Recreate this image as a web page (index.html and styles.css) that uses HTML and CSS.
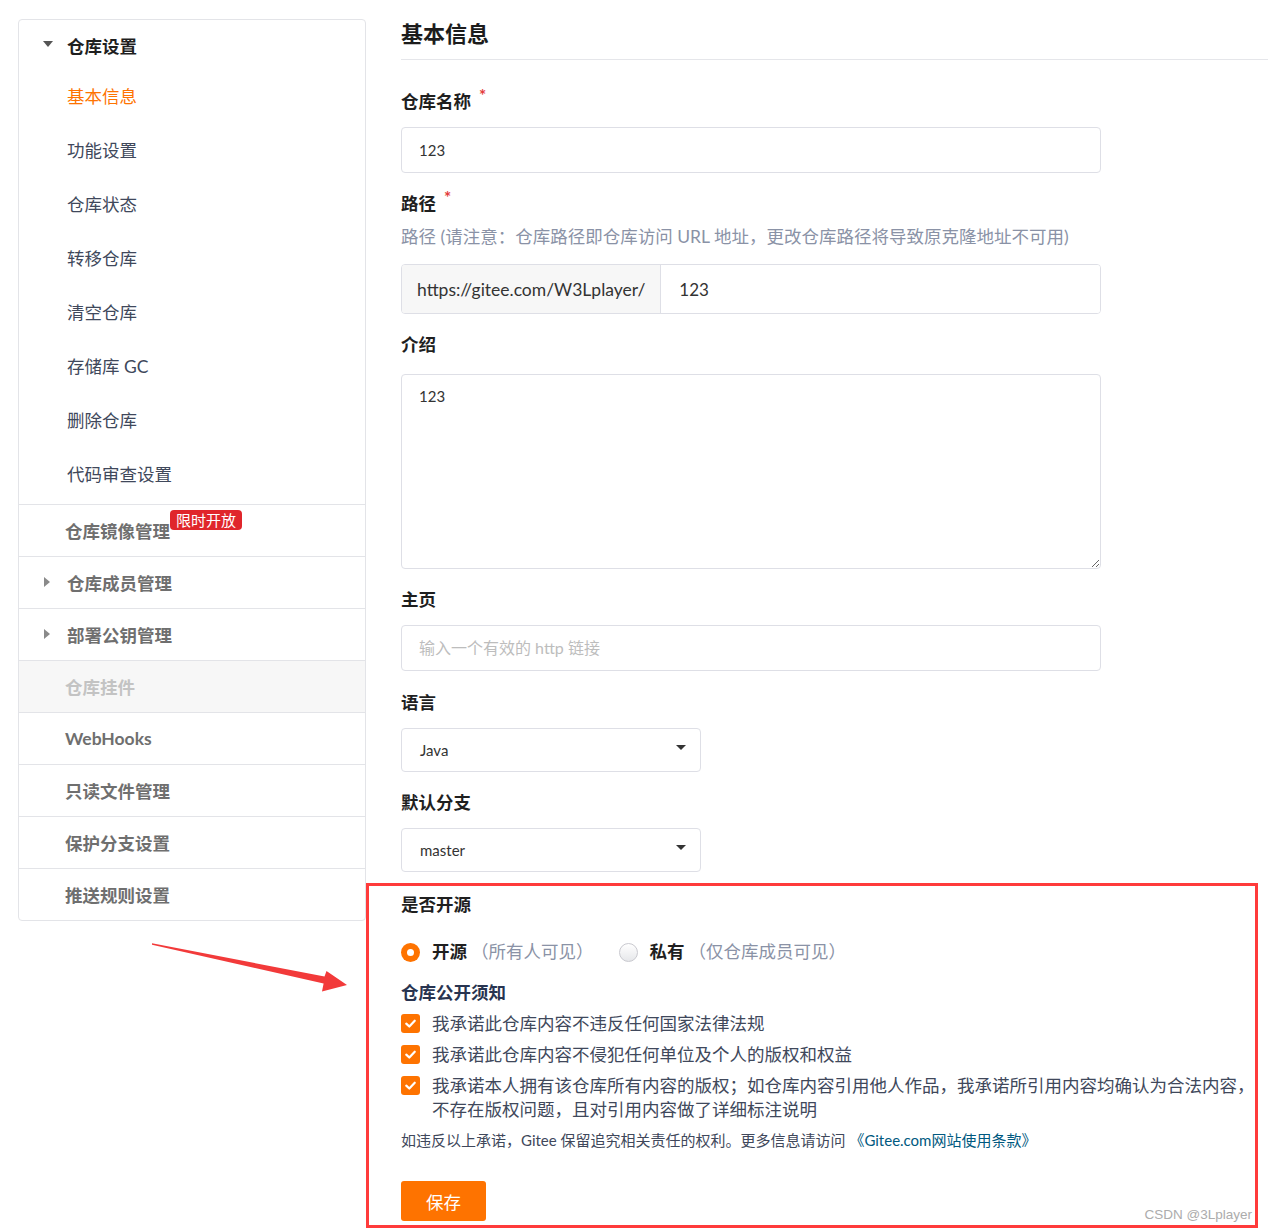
FILE: index.html
```html
<!DOCTYPE html>
<html lang="zh-CN">
<head>
<meta charset="utf-8">
<title>基本信息</title>
<link rel="stylesheet" href="styles.css">
</head>
<body>
<div class="page">
  <aside class="sidebar">
    <div class="group">
      <div class="group-head"><span class="caret-down"></span>仓库设置</div>
      <div class="sub active">基本信息</div>
      <div class="sub">功能设置</div>
      <div class="sub">仓库状态</div>
      <div class="sub">转移仓库</div>
      <div class="sub">清空仓库</div>
      <div class="sub">存储库 GC</div>
      <div class="sub">删除仓库</div>
      <div class="sub">代码审查设置</div>
    </div>
    <div class="row">仓库镜像管理<span class="badge">限时开放</span></div>
    <div class="row with-caret"><span class="caret-right"></span>仓库成员管理</div>
    <div class="row with-caret"><span class="caret-right"></span>部署公钥管理</div>
    <div class="row disabled">仓库挂件</div>
    <div class="row">WebHooks</div>
    <div class="row">只读文件管理</div>
    <div class="row">保护分支设置</div>
    <div class="row">推送规则设置</div>
  </aside>

  <main class="main">
    <h2 class="title">基本信息</h2>

    <div class="field first">
      <div class="label">仓库名称<span class="req">*</span></div>
      <input class="input" type="text" value="123">
    </div>

    <div class="field">
      <div class="label">路径<span class="req">*</span></div>
      <div class="help">路径 (请注意：仓库路径即仓库访问 URL 地址，更改仓库路径将导致原克隆地址不可用)</div>
      <div class="path-group">
        <div class="path-prefix">https://gitee.com/W3Lplayer/</div>
        <input class="path-input" type="text" value="123">
      </div>
    </div>

    <div class="field">
      <div class="label">介绍</div>
      <textarea class="textarea">123</textarea>
    </div>

    <div class="field">
      <div class="label">主页</div>
      <input class="input" type="text" placeholder="输入一个有效的 http 链接">
    </div>

    <div class="field wide-gap">
      <div class="label">语言</div>
      <div class="select"><span>Java</span><span class="select-caret"></span></div>
    </div>

    <div class="field">
      <div class="label">默认分支</div>
      <div class="select"><span>master</span><span class="select-caret"></span></div>
    </div>

    <section class="open-box">
      <div class="box-label">是否开源</div>
      <div class="radios">
        <div class="radio-item"><span class="radio checked"></span><b>开源</b><span class="muted">（所有人可见）</span></div>
        <div class="radio-item"><span class="radio"></span><b>私有</b><span class="muted">（仅仓库成员可见）</span></div>
      </div>
      <div class="notice-title">仓库公开须知</div>
      <div class="check-row"><span class="checkbox"><svg viewBox="0 0 20 20" width="20" height="20"><path d="M5 10.2 L8.6 13.6 L15 6.8" fill="none" stroke="#fff" stroke-width="2.6" stroke-linecap="round" stroke-linejoin="round"/></svg></span><span class="check-text">我承诺此仓库内容不违反任何国家法律法规</span></div>
      <div class="check-row"><span class="checkbox"><svg viewBox="0 0 20 20" width="20" height="20"><path d="M5 10.2 L8.6 13.6 L15 6.8" fill="none" stroke="#fff" stroke-width="2.6" stroke-linecap="round" stroke-linejoin="round"/></svg></span><span class="check-text">我承诺此仓库内容不侵犯任何单位及个人的版权和权益</span></div>
      <div class="check-row"><span class="checkbox"><svg viewBox="0 0 20 20" width="20" height="20"><path d="M5 10.2 L8.6 13.6 L15 6.8" fill="none" stroke="#fff" stroke-width="2.6" stroke-linecap="round" stroke-linejoin="round"/></svg></span><span class="check-text"><span class="line">我承诺本人拥有该仓库所有内容的版权；如仓库内容引用他人作品，我承诺所引用内容均确认为合法内容，</span><span class="line">不存在版权问题，且对引用内容做了详细标注说明</span></span></div>
      <div class="note">如违反以上承诺，Gitee 保留追究相关责任的权利。更多信息请访问 <a class="link">《Gitee.com网站使用条款》</a></div>
      <button class="save">保存</button>
    </section>
  </main>

  <svg class="arrow" width="200" height="52" viewBox="150 942 200 52">
    <polygon points="152,943.2 324.5,976.6 326.5,971 347,985 322,991.5 323.6,983.4 152,944.8" fill="#f23a3a"/>
  </svg>
  <div class="watermark">CSDN @3Lplayer</div>
</div>
</body>
</html>
```

FILE: styles.css
```css
* { box-sizing: border-box; }

html, body {
  margin: 0;
  padding: 0;
  background: #fff;
}

body {
  font-family: "Lato", "Noto Sans CJK SC", sans-serif;
  color: #40485b;
  overflow: hidden;
}

.page {
  position: relative;
  display: flex;
  align-items: flex-start;
  gap: 35px;
  padding: 19px 0 0 18px;
  min-height: 1231px;
}

/* Sidebar */
.sidebar {
  flex: 0 0 348px;
  width: 348px;
  border: 1px solid #e3e4e8;
  border-radius: 4px;
  background: #fff;
}

.group {
  padding-bottom: 2px;
  border-bottom: 1px solid #e3e4e8;
}

.group-head {
  display: flex;
  align-items: center;
  height: 50px;
  padding-left: 24px;
  font-size: 17.5px;
  font-weight: 700;
  color: #1f1f1f;
}

.caret-down {
  width: 0;
  height: 0;
  border-left: 5px solid transparent;
  border-right: 5px solid transparent;
  border-top: 6px solid #555;
  margin-right: 14px;
  margin-top: -2px;
}

.sub {
  height: 54px;
  line-height: 54px;
  padding-left: 48px;
  font-size: 17.5px;
  color: #40485b;
}

.sub.active {
  color: #fe7300;
}

.row {
  display: flex;
  align-items: center;
  height: 52px;
  padding-left: 46px;
  font-size: 17.5px;
  font-weight: 700;
  color: #6f6f6f;
  border-bottom: 1px solid #e3e4e8;
}

.row:last-child {
  border-bottom: none;
  height: 51px;
}

.row.with-caret {
  padding-left: 25px;
}

.caret-right {
  width: 0;
  height: 0;
  border-top: 5px solid transparent;
  border-bottom: 5px solid transparent;
  border-left: 6px solid #8a8a8a;
  margin-right: 17px;
  margin-top: -2px;
}

.row.disabled {
  background: #f7f7f7;
  color: #c3c3c3;
}

.badge {
  position: relative;
  top: -11px;
  display: inline-block;
  height: 20px;
  line-height: 20px;
  padding: 0 6px;
  border-radius: 4px;
  background: #e0262b;
  color: #fff;
  font-size: 15px;
  font-weight: 400;
}

/* Main */
.main {
  flex: 1 1 auto;
  min-width: 0;
}

.title {
  margin: 0;
  font-size: 22px;
  font-weight: 700;
  line-height: 30px;
  padding-bottom: 10px;
  border-bottom: 1px solid #e5e6ea;
  color: #1c1c1c;
}

.field {
  margin-top: 19px;
  width: 700px;
}

.field.first {
  margin-top: 30px;
}

.field.wide-gap {
  margin-top: 20px;
}

.label {
  font-size: 17.5px;
  font-weight: 700;
  line-height: 24px;
  color: #1f1f1f;
  margin-bottom: 13px;
}

.req {
  color: #e33b3b;
  font-size: 17px;
  margin-left: 8px;
  position: relative;
  top: -6px;
}

.help {
  margin: -4px 0 15px;
  font-size: 17.5px;
  line-height: 24px;
  color: #8a92a6;
}

.input {
  display: block;
  width: 700px;
  height: 46px;
  padding: 0 17px;
  border: 1px solid #dedfe6;
  border-radius: 4px;
  font-family: "Lato", "Noto Sans CJK SC", sans-serif;
  font-size: 15px;
  color: #333;
  outline: none;
}

.input::placeholder {
  color: #bdbdbd;
  font-size: 16px;
}

.path-group {
  display: flex;
  height: 50px;
  border: 1px solid #dedfe6;
  border-radius: 4px;
  overflow: hidden;
}

.path-prefix {
  display: flex;
  align-items: center;
  padding: 0 15px 0 15px;
  background: #f7f7f7;
  border-right: 1px solid #dedfe6;
  font-size: 17.5px;
  color: #333;
  white-space: nowrap;
}

.path-input {
  flex: 1 1 auto;
  min-width: 0;
  border: none;
  outline: none;
  padding: 0 18px;
  font-family: "Lato", "Noto Sans CJK SC", sans-serif;
  font-size: 17px;
  color: #333;
}

.textarea {
  display: block;
  width: 700px;
  height: 195px;
  margin-top: 17px;
  padding: 11px 17px;
  border: 1px solid #dedfe6;
  border-radius: 4px;
  font-family: "Lato", "Noto Sans CJK SC", sans-serif;
  font-size: 15px;
  line-height: 20px;
  color: #333;
  outline: none;
}

.select {
  display: flex;
  align-items: center;
  justify-content: space-between;
  width: 300px;
  height: 44px;
  padding: 0 14px 0 18px;
  border: 1px solid #dedfe6;
  border-radius: 4px;
  font-size: 15px;
  color: #333;
}

.select-caret {
  width: 0;
  height: 0;
  border-left: 5px solid transparent;
  border-right: 5px solid transparent;
  border-top: 5px solid #333;
  margin-top: -6px;
}

/* Open source annotation box */
.open-box {
  margin: 11px 10px 0 -35px;
  border: 3px solid #ff3b3b;
  padding: 7px 0 4px 32px;
}

.box-label {
  font-size: 17.5px;
  font-weight: 700;
  line-height: 24px;
  color: #1f1f1f;
}

.radios {
  display: flex;
  align-items: center;
  gap: 25px;
  margin-top: 23px;
  line-height: 24px;
  font-size: 17.5px;
}

.radio-item {
  display: flex;
  align-items: center;
}

.radio-item b {
  color: #1f1f1f;
  margin-left: 12px;
}

.radio {
  position: relative;
  width: 19px;
  height: 19px;
  border-radius: 50%;
  border: 1px solid #c9c9cf;
  background: linear-gradient(#ffffff, #e6e7ea);
}

.radio.checked {
  border: none;
  background: #fe7300;
}

.radio.checked::after {
  content: "";
  position: absolute;
  left: 6px;
  top: 6px;
  width: 7px;
  height: 7px;
  border-radius: 50%;
  background: #fff;
}

.muted {
  color: #8a92a6;
  margin-left: 4px;
}

.notice-title {
  margin-top: 17px;
  font-size: 17.5px;
  font-weight: 700;
  line-height: 24px;
  color: #283450;
}

.check-row {
  display: flex;
  align-items: flex-start;
  margin-top: 7px;
  font-size: 17.5px;
  line-height: 24px;
  color: #40485b;
}

.checkbox {
  flex: 0 0 19px;
  width: 19px;
  height: 19px;
  margin-top: 2px;
  border-radius: 3px;
  background: #fe7300;
  display: flex;
  align-items: center;
  justify-content: center;
}

.checkbox svg {
  width: 17px;
  height: 17px;
}

.check-text {
  margin-left: 12px;
}

.check-text .line {
  display: block;
  white-space: nowrap;
}

.note {
  margin-top: 8px;
  font-size: 15px;
  line-height: 20px;
  color: #40485b;
}

.link {
  color: #005980;
  text-decoration: none;
}

.save {
  display: block;
  margin-top: 31px;
  width: 85px;
  height: 40px;
  border: none;
  border-radius: 3px;
  background: #fe7300;
  color: #fff;
  font-family: "Lato", "Noto Sans CJK SC", sans-serif;
  font-size: 17.5px;
  padding: 0;
}

/* Annotation overlays */
.arrow {
  position: absolute;
  left: 150px;
  top: 942px;
}

.watermark {
  position: absolute;
  right: 16px;
  top: 1207px;
  font-family: "Liberation Sans", sans-serif;
  font-size: 13.5px;
  color: #acacac;
}
```
